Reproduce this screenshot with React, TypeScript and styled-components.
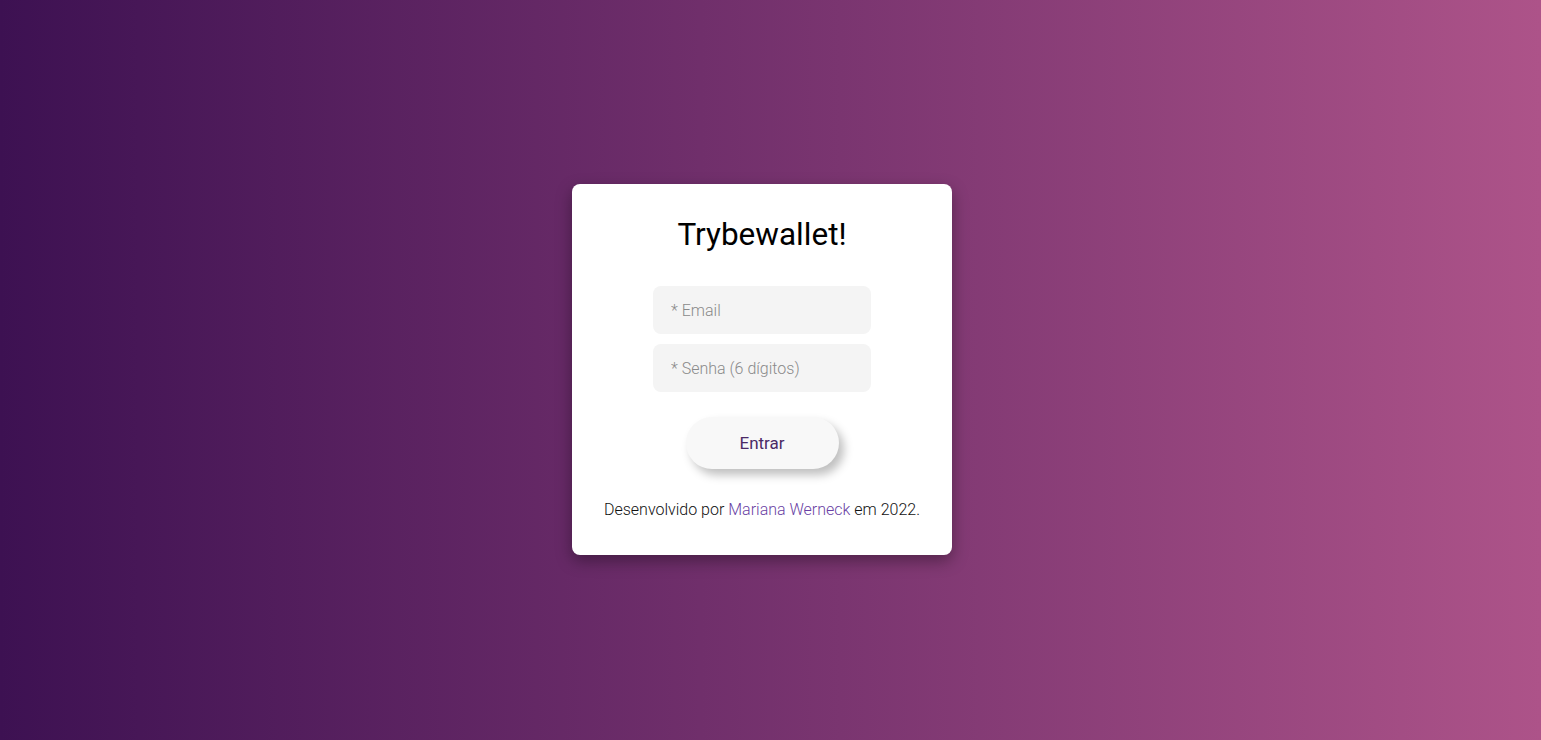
import React from "react";
import styled, { createGlobalStyle } from "styled-components";

const Global = createGlobalStyle`
  html, body { margin: 0; padding: 0; height: 100%; }
  body { font-family: Roboto, "Noto Sans", sans-serif; }
  #root { height: 100%; }
  * { box-sizing: border-box; }
`;

const Page = styled.main`
  width: 100%;
  height: 740px;
  background: linear-gradient(to right, #3d1152, #ad5389);
  display: flex;
  align-items: flex-start;
  justify-content: center;
  padding: 184px 17px 0 0;
`;

const Card = styled.section`
  width: 380px;
  height: 371px;
  background: #ffffff;
  border-radius: 8px;
  box-shadow: 0 6px 16px rgba(0, 0, 0, 0.35);
  display: flex;
  flex-direction: column;
  align-items: center;
  padding: 32px 0 0;
`;

const Title = styled.h1`
  margin: 0;
  font-family: Roboto, sans-serif;
  font-weight: 400;
  font-size: 31.5px;
  line-height: 37.5px;
  color: #000;
`;

const Form = styled.form`
  display: flex;
  flex-direction: column;
  align-items: center;
  gap: 10px;
  margin-top: 32.5px;
`;

const Input = styled.input`
  width: 218px;
  height: 48px;
  border: none;
  outline: none;
  border-radius: 8px;
  background: #f4f4f4;
  padding: 0 18px;
  font-family: Roboto, sans-serif;
  font-weight: 300;
  font-size: 16px;
  color: #333;
  &::placeholder {
    color: #8a8a8a;
  }
`;

const Button = styled.button`
  margin-top: 15px;
  width: 153px;
  height: 52px;
  border: none;
  border-radius: 26px;
  background: #f8f8f8;
  box-shadow: 5px 6px 10px rgba(0, 0, 0, 0.25);
  font-family: Roboto, sans-serif;
  font-weight: 400;
  font-size: 17px;
  color: #4b2a66;
  cursor: pointer;
`;

const Footer = styled.p`
  margin: 32px 0 0;
  font-family: Roboto, sans-serif;
  font-weight: 300;
  font-size: 16px;
  line-height: 18.75px;
  color: #111;
`;

const Link = styled.a`
  color: #6a3fa4;
  text-decoration: none;
`;

export default function App() {
  return (
    <>
      <Global />
      <Page>
        <Card>
          <Title>Trybewallet!</Title>
          <Form onSubmit={(e) => e.preventDefault()}>
            <Input type="email" placeholder="* Email" />
            <Input type="password" placeholder="* Senha (6 dígitos)" />
            <Button type="submit">Entrar</Button>
          </Form>
          <Footer>
            Desenvolvido por <Link href="#">Mariana Werneck</Link> em 2022.
          </Footer>
        </Card>
      </Page>
    </>
  );
}
